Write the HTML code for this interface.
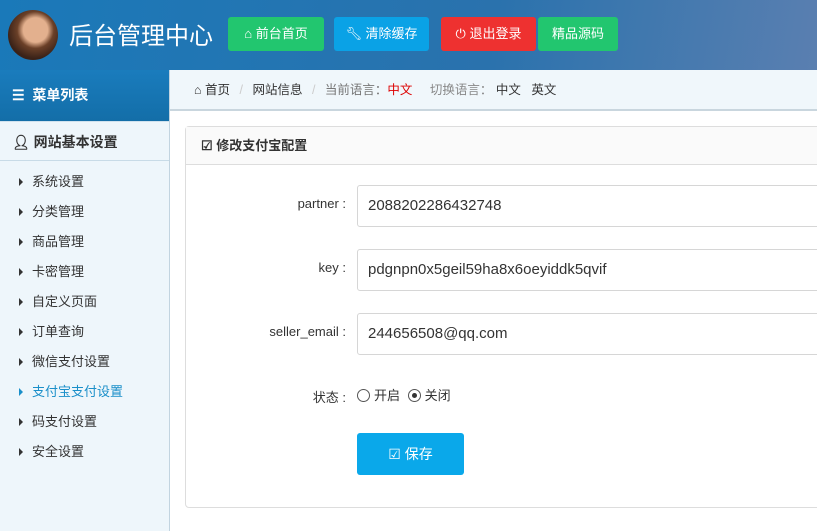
<!DOCTYPE html>
<html><head><meta charset="utf-8"><style>
*{margin:0;padding:0;box-sizing:border-box}
body{width:817px;height:531px;overflow:hidden;font-family:"Liberation Sans","Noto Sans CJK SC",sans-serif;background:#fff;position:relative;font-size:13px;color:#333}
.hd{position:absolute;left:0;top:0;width:817px;height:70px;background:linear-gradient(100deg,#1a79b9 0%,#2a72ad 60%,#5a7fb0 100%)}
.av{position:absolute;left:8px;top:10px;width:50px;height:50px;border-radius:50%;background:radial-gradient(circle at 55% 40%,#e3b08e 0 30%,#6b4028 45%,#3a2218 70%)}
.tt{position:absolute;left:69px;top:17px;color:#fff;font-size:24px;font-family:"Noto Sans CJK SC",sans-serif;line-height:34px}
.b{position:absolute;top:17px;height:34px;border-radius:3px;color:#fff;font-size:13px;line-height:34px;text-align:center}
.sb{position:absolute;left:0;top:70px;width:170px;height:461px;background:#eef6fb;border-right:1px solid #c2d4e0}
.sh{height:51px;background:linear-gradient(#1a7cbd,#136ea8);color:#fff;font-weight:bold;font-size:14px;line-height:51px;padding-left:12px}
.sg{height:40px;line-height:40px;border-bottom:1px solid #c8dbe7;border-top:1px solid #d0e2ee;font-weight:bold;font-size:14px;padding-left:12px;color:#333}
.it{height:30px;line-height:30px;padding-left:19px;font-size:13px;color:#333}
.it:before{content:"";display:inline-block;border-left:4px solid #333;border-top:4px solid transparent;border-bottom:4px solid transparent;margin-right:9px;vertical-align:0}
.it.a{color:#1a8fc9}.it.a:before{border-left-color:#1a8fc9}
.bc{position:absolute;left:170px;top:70px;width:647px;height:41px;background:#f0f7fb;border-bottom:2px solid #c9d6de;line-height:40px;font-size:12.5px;padding-left:24px}
.pn{position:absolute;left:185px;top:126px;width:640px;height:382px;border:1px solid #ddd;border-radius:4px}
.ph{height:38px;background:#fafafa;border-bottom:1px solid #ddd;line-height:38px;padding-left:15px;font-weight:bold;font-size:13px}
.lb{position:absolute;right:471px;font-size:13px;color:#333}
.in{position:absolute;left:357px;width:470px;height:42px;border:1px solid #d6d6d6;border-radius:3px;font-size:15px;line-height:40px;padding-left:10px;color:#333}
.rd{display:inline-block;width:13px;height:13px;border:1px solid #555;border-radius:50%;vertical-align:-2px;margin-right:4px;position:relative}
</style></head><body>
<div class="hd">
<div class="av"></div>
<div class="tt">后台管理中心</div>
<div class="b" style="left:228px;width:96px;background:#22c66f">⌂ 前台首页</div>
<div class="b" style="left:334px;width:95px;background:#0aa2e6">🔧︎ 清除缓存</div>
<div class="b" style="left:441px;width:95px;background:#ee3130">⏻ 退出登录</div>
<div class="b" style="left:538px;width:80px;background:#22c66f">精品源码</div>
</div>
<div class="sb">
<div class="sh">☰&nbsp; 菜单列表</div>
<div class="sg">👤︎ 网站基本设置</div>
<div style="height:6px"></div>
<div class="it">系统设置</div><div class="it">分类管理</div><div class="it">商品管理</div><div class="it">卡密管理</div><div class="it">自定义页面</div><div class="it">订单查询</div><div class="it">微信支付设置</div><div class="it a">支付宝支付设置</div><div class="it">码支付设置</div><div class="it">安全设置</div>
</div>
<div class="bc">⌂ 首页 <span style="color:#ccc;margin:0 6px">/</span> 网站信息 <span style="color:#ccc;margin:0 6px">/</span> <span style="color:#777">当前语言：</span><span style="color:#d00">中文</span> <span style="color:#888;margin-left:14px">切换语言：</span> 中文 &nbsp; 英文</div>
<div class="pn"><div class="ph">☑ 修改支付宝配置</div></div>
<div class="lb" style="top:196px">partner :</div>
<div class="in" style="top:185px">2088202286432748</div>
<div class="lb" style="top:260px">key :</div>
<div class="in" style="top:249px">pdgnpn0x5geil59ha8x6oeyiddk5qvif</div>
<div class="lb" style="top:324px">seller_email :</div>
<div class="in" style="top:313px">244656508@qq.com</div>
<div class="lb" style="top:387px">状态 :</div>
<div style="position:absolute;left:357px;top:385px;font-size:13px"><span class="rd"></span>开启 <span class="rd" style="margin-left:4px"><span style="position:absolute;left:3px;top:3px;width:5px;height:5px;border-radius:50%;background:#333"></span></span>关闭</div>
<div style="position:absolute;left:357px;top:433px;width:107px;height:42px;background:#0aa8ea;border-radius:3px;color:#fff;font-size:14px;line-height:42px;text-align:center">☑ 保存</div>
</body></html>
